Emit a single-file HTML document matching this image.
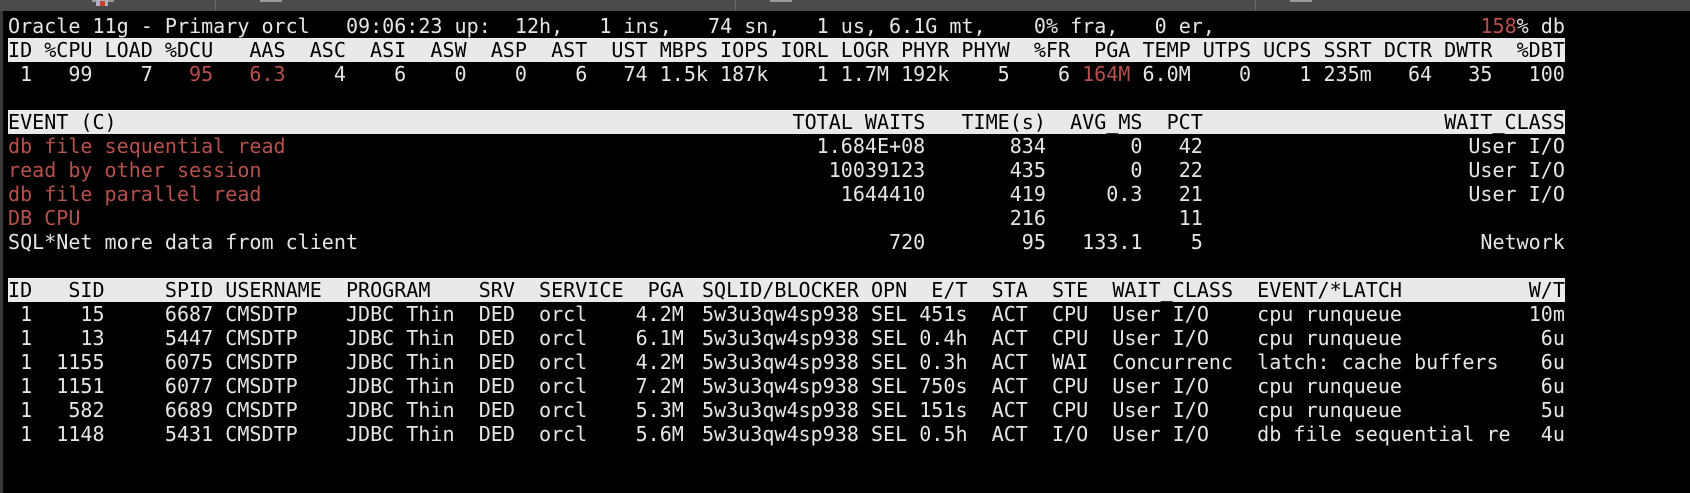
<!DOCTYPE html>
<html><head><meta charset="utf-8">
<style>
html,body{margin:0;padding:0;background:#000;}
body{width:1690px;height:493px;position:relative;overflow:hidden;}
#tab{position:absolute;left:0;top:0;width:1690px;height:11px;background:#4b4b4b;}
#tab i{position:absolute;top:0;width:22px;height:2px;background:#9a9a9a;}
#tab b{position:absolute;top:0;width:1px;height:11px;background:#6a6a6a;}
#lb{position:absolute;left:0;top:11px;width:3px;height:482px;background:#3a3a3a;}
#t{position:absolute;left:8px;top:14px;font-family:"DejaVu Sans Mono","Liberation Mono",monospace;font-size:20.06px;line-height:24px;color:#e6e6e6;white-space:normal;}
.r{height:24px;width:129ch;white-space:pre;overflow:hidden;}
.h{background:#e9e9e9;color:#000;}
.c{display:inline-block;text-align:right;}
.l{display:inline-block;text-align:left;}
.red{color:#b6504c;}
.hs{display:inline-block;width:0.5ch;}
</style></head><body>
<div id="tab"><i style="left:92px"></i><i style="left:260px"></i><i style="left:770px"></i><i style="left:1290px"></i><b style="left:215px"></b><b style="left:735px"></b><b style="left:1255px"></b><div style="position:absolute;left:96px;top:0;width:12px;height:6px;background:#b0b0c8"></div><div style="position:absolute;left:100px;top:1px;width:5px;height:5px;background:#d04020"></div></div>
<div id="lb"></div>
<div id="t"><div class="r">Oracle 11g - Primary orcl   09:06:23 up:  12h,   1 ins,   74 sn,   1 us, 6.1G mt,    0% fra,   0 er,                      <span class="red">158</span>% db</div><div class="r h"><span class="c" style="width:2ch">ID</span><span class="c" style="width:5ch">%CPU</span><span class="c" style="width:5ch">LOAD</span><span class="c" style="width:5ch">%DCU</span><span class="c" style="width:6ch">AAS</span><span class="c" style="width:5ch">ASC</span><span class="c" style="width:5ch">ASI</span><span class="c" style="width:5ch">ASW</span><span class="c" style="width:5ch">ASP</span><span class="c" style="width:5ch">AST</span><span class="c" style="width:5ch">UST</span><span class="c" style="width:5ch">MBPS</span><span class="c" style="width:5ch">IOPS</span><span class="c" style="width:5ch">IORL</span><span class="c" style="width:5ch">LOGR</span><span class="c" style="width:5ch">PHYR</span><span class="c" style="width:5ch">PHYW</span><span class="c" style="width:5ch">%FR</span><span class="c" style="width:5ch">PGA</span><span class="c" style="width:5ch">TEMP</span><span class="c" style="width:5ch">UTPS</span><span class="c" style="width:5ch">UCPS</span><span class="c" style="width:5ch">SSRT</span><span class="c" style="width:5ch">DCTR</span><span class="c" style="width:5ch">DWTR</span><span class="c" style="width:6ch">%DBT</span></div><div class="r"><span class="c" style="width:2ch">1</span><span class="c" style="width:5ch">99</span><span class="c" style="width:5ch">7</span><span class="c red" style="width:5ch">95</span><span class="c red" style="width:6ch">6.3</span><span class="c" style="width:5ch">4</span><span class="c" style="width:5ch">6</span><span class="c" style="width:5ch">0</span><span class="c" style="width:5ch">0</span><span class="c" style="width:5ch">6</span><span class="c" style="width:5ch">74</span><span class="c" style="width:5ch">1.5k</span><span class="c" style="width:5ch">187k</span><span class="c" style="width:5ch">1</span><span class="c" style="width:5ch">1.7M</span><span class="c" style="width:5ch">192k</span><span class="c" style="width:5ch">5</span><span class="c" style="width:5ch">6</span><span class="c red" style="width:5ch">164M</span><span class="c" style="width:5ch">6.0M</span><span class="c" style="width:5ch">0</span><span class="c" style="width:5ch">1</span><span class="c" style="width:5ch">235m</span><span class="c" style="width:5ch">64</span><span class="c" style="width:5ch">35</span><span class="c" style="width:6ch">100</span></div><div class="r"></div><div class="r h"><span class="l" style="width:65ch">EVENT (C)</span><span class="c" style="width:11ch">TOTAL WAITS</span><span class="c" style="width:10ch">TIME(s)</span><span class="c" style="width:8ch">AVG_MS</span><span class="c" style="width:5ch">PCT</span><span class="c" style="width:30ch">WAIT_CLASS</span></div><div class="r"><span class="l red" style="width:65ch">db file sequential read</span><span class="c" style="width:11ch">1.684E+08</span><span class="c" style="width:10ch">834</span><span class="c" style="width:8ch">0</span><span class="c" style="width:5ch">42</span><span class="c" style="width:30ch">User I/O</span></div><div class="r"><span class="l red" style="width:65ch">read by other session</span><span class="c" style="width:11ch">10039123</span><span class="c" style="width:10ch">435</span><span class="c" style="width:8ch">0</span><span class="c" style="width:5ch">22</span><span class="c" style="width:30ch">User I/O</span></div><div class="r"><span class="l red" style="width:65ch">db file parallel read</span><span class="c" style="width:11ch">1644410</span><span class="c" style="width:10ch">419</span><span class="c" style="width:8ch">0.3</span><span class="c" style="width:5ch">21</span><span class="c" style="width:30ch">User I/O</span></div><div class="r"><span class="l red" style="width:65ch">DB CPU</span><span class="c" style="width:11ch"></span><span class="c" style="width:10ch">216</span><span class="c" style="width:8ch"></span><span class="c" style="width:5ch">11</span><span class="c" style="width:30ch"></span></div><div class="r"><span class="l" style="width:65ch">SQL*Net more data from client</span><span class="c" style="width:11ch">720</span><span class="c" style="width:10ch">95</span><span class="c" style="width:8ch">133.1</span><span class="c" style="width:5ch">5</span><span class="c" style="width:30ch">Network</span></div><div class="r"></div><div class="r h">ID   SID     SPID USERNAME  PROGRAM    SRV  SERVICE  PGA <span class="hs"></span>SQLID/BLOCKER OPN  E/T  STA  STE  WAIT_CLASS  EVENT/*LATCH          <span class="hs"></span>W/T</div><div class="r"> 1    15     6687 CMSDTP    JDBC Thin  DED  orcl    4.2M <span class="hs"></span>5w3u3qw4sp938 SEL 451s  ACT  CPU  User I/O    cpu runqueue          <span class="hs"></span>10m</div><div class="r"> 1    13     5447 CMSDTP    JDBC Thin  DED  orcl    6.1M <span class="hs"></span>5w3u3qw4sp938 SEL 0.4h  ACT  CPU  User I/O    cpu runqueue           <span class="hs"></span>6u</div><div class="r"> 1  1155     6075 CMSDTP    JDBC Thin  DED  orcl    4.2M <span class="hs"></span>5w3u3qw4sp938 SEL 0.3h  ACT  WAI  Concurrenc  latch: cache buffers   <span class="hs"></span>6u</div><div class="r"> 1  1151     6077 CMSDTP    JDBC Thin  DED  orcl    7.2M <span class="hs"></span>5w3u3qw4sp938 SEL 750s  ACT  CPU  User I/O    cpu runqueue           <span class="hs"></span>6u</div><div class="r"> 1   582     6689 CMSDTP    JDBC Thin  DED  orcl    5.3M <span class="hs"></span>5w3u3qw4sp938 SEL 151s  ACT  CPU  User I/O    cpu runqueue           <span class="hs"></span>5u</div><div class="r"> 1  1148     5431 CMSDTP    JDBC Thin  DED  orcl    5.6M <span class="hs"></span>5w3u3qw4sp938 SEL 0.5h  ACT  I/O  User I/O    db file sequential re  <span class="hs"></span>4u</div></div>
</body></html>
